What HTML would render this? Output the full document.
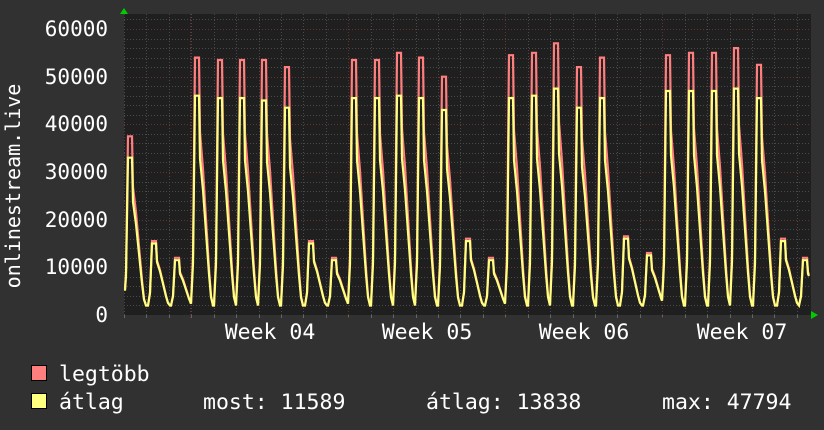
<!DOCTYPE html><html><head><meta charset="utf-8"><style>
body{margin:0;background:#313131;width:824px;height:430px;overflow:hidden}
svg{display:block}
text{font-family:"DejaVu Sans Mono","Liberation Mono",monospace;fill:#fff}
</style></head><body>
<svg id="s" width="824" height="430" xmlns="http://www.w3.org/2000/svg">
<rect x="0" y="0" width="824" height="430" fill="#313131"/>
<rect x="124" y="14" width="687" height="301" fill="#1f1f1f"/>
<g id="grid"></g>
<path id="mx" fill="none" stroke="#ff7f7f" stroke-width="2.2"/>
<path id="av" fill="none" stroke="#ffff80" stroke-width="2.2"/>
<polygon points="120,14 128,14 124,8" fill="#00cc00"/>
<polygon points="811,311 811,319 818,315" fill="#00cc00"/>
<g font-size="21" text-anchor="end">
<text x="108" y="36">60000</text><text x="108" y="84">50000</text><text x="108" y="131">40000</text><text x="108" y="179">30000</text><text x="108" y="227">20000</text><text x="108" y="274">10000</text><text x="108" y="322">0</text>
</g>
<text font-size="20" transform="translate(20,186) rotate(-90)" text-anchor="middle">onlinestream.live</text>
<g font-size="21.5" text-anchor="middle">
<text x="270" y="339">Week 04</text><text x="427" y="339">Week 05</text><text x="584" y="339">Week 06</text><text x="742" y="339">Week 07</text>
</g>
<rect x="31.5" y="365.5" width="15" height="15" fill="#ff7f7f" stroke="#000"/>
<rect x="31.5" y="393.5" width="15" height="15" fill="#ffff80" stroke="#000"/>
<g font-size="21.5">
<text x="59" y="381">legtöbb</text>
<text x="59" y="409">átlag</text>
<text x="203" y="409">most: 11589</text>
<text x="426" y="409">átlag: 13838</text>
<text x="662" y="409">max: 47794</text>
</g>
</svg>
<script>
var ns="http://www.w3.org/2000/svg",g=document.getElementById('grid');
function Y(v){return 315-v*286/60000;}
function ln(x1,y1,x2,y2,c,d){var l=document.createElementNS(ns,'line');l.setAttribute('x1',x1);l.setAttribute('y1',y1);l.setAttribute('x2',x2);l.setAttribute('y2',y2);l.setAttribute('stroke',c);l.setAttribute('stroke-width',1);if(d)l.setAttribute('stroke-dasharray',d);g.appendChild(l);}
for(var v=2000;v<=62000;v+=2000){var y=Math.round(Y(v))+0.5;ln(124,y,811,y,v%10000?'#4a4a4a':'#6a3030','1,2');}
for(var x=124;x<811;x+=157/7){var xx=Math.round(x)+0.5;ln(xx,14,xx,315,'#4a4a4a','1,2');ln(xx,315,xx,318,'#666');}
[190,348,505,662].forEach(function(x){ln(x+.5,14,x+.5,318,'#6a3030','1,2');});
var P=[[131,37500,33000],[155,15500,15000],[178,12000,11500],[198,54000,46000],[221,53500,45500],[243,53500,45500],[265,53500,45000],[288,52000,43500],[312,15500,15000],[335,12000,11500],[355,53500,45500],[378,53500,45500],[400,55000,46000],[422,54000,45500],[445,50000,43000],[469,16000,15500],[492,12000,11500],[512,54500,45500],[535,55000,46000],[557,57000,47500],[580,52000,43500],[603,54000,45500],[627,16500,16000],[650,13000,12500],[669,54500,47000],[692,55000,47000],[715,55000,47000],[737,56000,47500],[760,52500,45500],[784,16000,15500],[806,12000,11500]];
var K=[[-7,0],[-5,0.2],[-4,0.6],[-3,1],[1,1],[2,0.7],[5,0.55],[8,0.35],[11,0.15],[13,0.04],[15,0]];
function sh(t){if(t<=K[0][0]||t>=K[K.length-1][0])return 0;for(var i=1;i<K.length;i++){if(t<=K[i][0]){var a=K[i-1],b=K[i];return a[1]+(b[1]-a[1])*(t-a[0])/(b[0]-a[0]);}}return 0;}
function val(x,idx){var m=2000;P.forEach(function(p){var s=sh(x-p[0]);var v=2000+(p[idx]-2000)*s;if(v>m)m=v;});return m;}
function build(idx){var d='';for(var x=125;x<=809;x++){d+=(x==125?'M':'L')+x+','+Y(val(x,idx)).toFixed(1);}return d;}
document.getElementById('mx').setAttribute('d',build(1));
document.getElementById('av').setAttribute('d',build(2));
</script>
</body></html>
